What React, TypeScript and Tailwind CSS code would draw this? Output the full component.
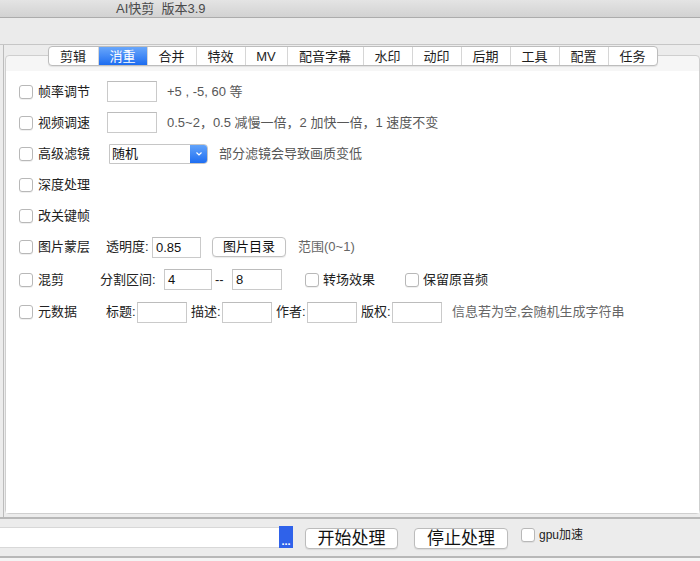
import type { ReactNode } from "react";

const tabs: [string, string][] = [
  ["剪辑", "w-[49px]"],
  ["消重", "w-[49px]"],
  ["合并", "w-[49px]"],
  ["特效", "w-[49px]"],
  ["MV", "w-[42px]"],
  ["配音字幕", "w-[76px]"],
  ["水印", "w-[49px]"],
  ["动印", "w-[49px]"],
  ["后期", "w-[49px]"],
  ["工具", "w-[49px]"],
  ["配置", "w-[49px]"],
  ["任务", "w-[49px]"],
];

function Check() {
  return (
    <span className="block w-[14px] h-[14px] shrink-0 rounded-[3px] border border-[#b8b8b8] bg-white shadow-[0_1px_0_rgba(0,0,0,0.06)]" />
  );
}

function Field({ w, value, className = "" }: { w: string; value?: string; className?: string }) {
  return (
    <div
      className={`${w} h-[21px] shrink-0 bg-white border border-[#cacaca] border-t-[#bcbcbc] pl-[3px] text-[13px] leading-[19px] text-[#111] ${className}`}
    >
      {value}
    </div>
  );
}

function Row({ h, label, children }: { h: string; label: string; children?: ReactNode }) {
  return (
    <div className={`${h} flex items-center`}>
      <div className="w-[94px] shrink-0 flex items-center pl-[13px]">
        <Check />
        <span className="ml-[5px]">{label}</span>
      </div>
      {children}
    </div>
  );
}

export default function App() {
  return (
    <div className="w-[700px] h-[561px] overflow-hidden bg-[#ececec] flex flex-col font-['Liberation_Sans','Noto_Sans_CJK_SC',sans-serif] text-[13px] text-[#222]">
      {/* title bar */}
      <div className="h-[18px] shrink-0 bg-linear-to-b from-[#e4e4e4] to-[#d2d2d2] border-b border-[#acacac] pl-[116px] text-[13px] leading-[17px] text-[#4a4a4a]">
        AI快剪&nbsp;&nbsp;版本3.9
      </div>

      {/* toolbar area */}
      <div className="h-[26px] shrink-0 bg-[#ebebeb]" />

      {/* main area */}
      <div className="h-[473px] shrink-0 border-t border-[#c6c6c6] flex">
        <div className="ml-[3px] border-l border-[#bcbcbc] pl-[1px] flex flex-col">
          <div className="relative z-10 w-[695px] flex justify-center mt-[1px]">
            <div className="flex h-[20px] rounded-[4px] border border-[#bdbdbd] bg-white shadow-[0_1px_1px_rgba(0,0,0,0.08)] overflow-hidden">
              {tabs.map(([t, w], i) => (
                <div
                  key={t}
                  className={`${w} flex items-center justify-center leading-none ${i > 0 ? "border-l border-[#d6d6d6]" : ""} ${
                    t === "消重" ? "bg-linear-to-b from-[#68a6fa] to-[#1b6cf0] text-white" : "text-[#1e1e1e]"
                  }`}
                >
                  {t}
                </div>
              ))}
            </div>
          </div>

          <div className="-mt-[11px] w-[695px] h-[459px] rounded-[4px] border border-[#cfcfcf] bg-[#f6f6f6] flex flex-col">
            <div className="h-[15px] shrink-0" />
            <div className="flex-1 bg-white pt-[5px]">
              <Row h="h-[31px]" label="帧率调节">
                <Field w="w-[50px]" className="ml-[7px]" />
                <span className="ml-[10px] text-[#575757]">+5 , -5, 60 等</span>
              </Row>
              <Row h="h-[31px]" label="视频调速">
                <Field w="w-[50px]" className="ml-[7px]" />
                <span className="ml-[10px] text-[#575757]">0.5~2，0.5 减慢一倍，2 加快一倍，1 速度不变</span>
              </Row>
              <Row h="h-[31px]" label="高级滤镜">
                <div className="ml-[9px] w-[99px] h-[20px] flex rounded-r-[4px] border border-[#c6c6c6] bg-white overflow-hidden">
                  <span className="flex-1 pl-[2px] leading-[18px] text-[#111]">随机</span>
                  <span className="w-[17px] bg-linear-to-b from-[#62a3fa] to-[#1d6df1] flex items-center justify-center">
                    <svg width="8" height="6" viewBox="0 0 8 6">
                      <path d="M1.5 1.5 L4 4 L6.5 1.5" fill="none" stroke="white" strokeWidth="1.2" />
                    </svg>
                  </span>
                </div>
                <span className="ml-[11px] text-[#575757]">部分滤镜会导致画质变低</span>
              </Row>
              <Row h="h-[31px]" label="深度处理" />
              <Row h="h-[31px]" label="改关键帧" />
              <Row h="h-[32px]" label="图片蒙层">
                <span className="ml-[6px] w-[46px]">透明度:</span>
                <Field w="w-[49px]" value="0.85" />
                <div className="ml-[11px] w-[74px] h-[20px] rounded-[4px] border border-[#c2c2c2] bg-white shadow-[0_1px_1px_rgba(0,0,0,0.08)] flex items-center justify-center text-[#111]">
                  图片目录
                </div>
                <span className="ml-[12px] text-[#666]">范围(0~1)</span>
              </Row>
              <Row h="h-[33px]" label="混剪">
                <span className="w-[64px]">分割区间:</span>
                <Field w="w-[48px]" value="4" />
                <span className="w-[20px] pl-[3px]">--</span>
                <Field w="w-[50px]" value="8" />
                <div className="ml-[23px] flex items-center">
                  <Check />
                </div>
                <span className="ml-[4px] w-[82px]">转场效果</span>
                <Check />
                <span className="ml-[4px]">保留原音频</span>
              </Row>
              <Row h="h-[32px]" label="元数据">
                <div className="ml-[6px] flex items-center gap-[4px]">
                  {["标题:", "描述:", "作者:", "版权:"].map((l) => (
                    <div key={l} className="flex items-center">
                      <span className="w-[31px]">{l}</span>
                      <Field w="w-[50px]" />
                    </div>
                  ))}
                </div>
                <span className="ml-[10px] text-[#666]">信息若为空,会随机生成字符串</span>
              </Row>
            </div>
          </div>
        </div>
      </div>

      {/* bottom bar */}
      <div className="h-[41px] shrink-0 border-t-2 border-b-2 border-[#b8b8b8] bg-[#ececec] flex items-start pt-[7px]">
        <div className="w-[279px] h-[21px] mt-[1px] bg-white border-y border-[#d8d8d8]" />
        <div className="w-[14px] h-[22px] bg-[#2f62ea] flex items-end justify-center text-white text-[11px] font-bold leading-[14px]">
          ...
        </div>
        <div className="ml-[12px] mt-[2px] w-[93px] h-[21px] rounded-[4px] border border-[#bcbcbc] bg-white shadow-[0_1px_1px_rgba(0,0,0,0.08)] flex items-center justify-center text-[17px] leading-none text-[#111]">
          开始处理
        </div>
        <div className="ml-[16px] mt-[2px] w-[94px] h-[21px] rounded-[4px] border border-[#bcbcbc] bg-white shadow-[0_1px_1px_rgba(0,0,0,0.08)] flex items-center justify-center text-[17px] leading-none text-[#111]">
          停止处理
        </div>
        <div className="ml-[13px] mt-[2px] flex items-center">
          <Check />
          <span className="ml-[4px] text-[12px] leading-[14px] text-[#222]">gpu加速</span>
        </div>
      </div>
      <div className="flex-1 bg-[#f4f4f4]" />
    </div>
  );
}
